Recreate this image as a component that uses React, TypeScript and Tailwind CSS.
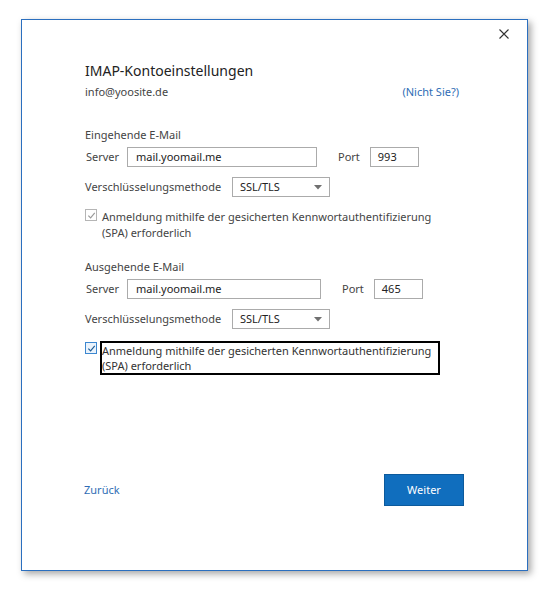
import React from "react";

const font = { fontFamily: '"Noto Sans", "Open Sans", sans-serif' };

function Tick({ color }: { color: string }) {
  return (
    <svg viewBox="0 0 10 10" className="w-[9px] h-[9px]">
      <path d="M1.5 5.2 L4 7.6 L8.6 2.2" fill="none" stroke={color} strokeWidth="1.3" />
    </svg>
  );
}

function ServerRow({ server, port, inputW, portGap }: { server: string; port: string; inputW: string; portGap: string }) {
  return (
    <div className="flex items-center h-[20px] mt-[4px]">
      <span className="w-[42px] pl-px text-[11px] text-[#444]">Server</span>
      <div className={`${inputW} h-[20px] border border-[#ababab] flex items-center pl-[8px] text-[11px] text-[#222]`}>
        {server}
      </div>
      <span className={`${portGap} text-[11px] text-[#444]`}>Port</span>
      <div className="w-[49px] h-[20px] border border-[#ababab] flex items-center pl-[7px] ml-[10px] text-[11px] text-[#222]">
        {port}
      </div>
    </div>
  );
}

function EncRow() {
  return (
    <div className="flex items-center h-[20px] mt-[10px]">
      <span className="w-[147px] text-[11px] text-[#444]">Verschlüsselungsmethode</span>
      <div className="w-[98px] h-[20px] border border-[#ababab] flex items-center justify-between pl-[7px] pr-[7px] text-[11px] text-[#222]">
        <span>SSL/TLS</span>
        <svg viewBox="0 0 8 5" className="w-[8px] h-[5px]">
          <path d="M0 0 H8 L4 4.5 Z" fill="#707070" />
        </svg>
      </div>
    </div>
  );
}

export default function App() {
  return (
    <div className="w-[553px] h-[597px] bg-white pt-[19px] pl-[21px]" style={font}>
      <div className="w-[507px] h-[552px] border border-[#2b6fbf] bg-white shadow-[3px_3px_7px_rgba(0,0,0,0.35)] flex flex-col">
        <div className="flex justify-end pt-[9px] pr-[18px]">
          <svg viewBox="0 0 10 10" className="w-[10px] h-[10px]">
            <path d="M0.5 0.5 L9.5 9.5 M9.5 0.5 L0.5 9.5" stroke="#333" strokeWidth="1.1" />
          </svg>
        </div>

        <div className="pl-[63px] flex flex-col">
          <h1 className="mt-[21px] h-[22px] leading-[22px] text-[14px] text-[#222]">IMAP-Kontoeinstellungen</h1>
          <div className="mt-[2px] h-[16px] leading-[16px] flex text-[11px]">
            <span className="text-[#444]">info@yoosite.de</span>
            <span className="ml-auto mr-[68px] text-[#2f6db5]">(Nicht Sie?)</span>
          </div>

          <div className="mt-[27px] h-[16px] leading-[16px] text-[11px] text-[#444]">Eingehende E-Mail</div>
          <ServerRow server="mail.yoomail.me" port="993" inputW="w-[190px]" portGap="ml-[21px]" />
          <EncRow />
          <div className="mt-[12px] flex items-start">
            <div className="mt-0 w-[12px] h-[12px] border border-[#b5b5b5] flex items-center justify-center">
              <Tick color="#9a9a9a" />
            </div>
            <p className="ml-[5px] w-[345px] text-[11px] leading-[16px] text-[#444]">
              Anmeldung mithilfe der gesicherten Kennwortauthentifizierung (SPA) erforderlich
            </p>
          </div>

          <div className="mt-[18px] h-[16px] leading-[16px] text-[11px] text-[#444]">Ausgehende E-Mail</div>
          <ServerRow server="mail.yoomail.me" port="465" inputW="w-[194px]" portGap="ml-[21px]" />
          <EncRow />
          <div className="mt-[12px] flex items-start">
            <div className="mt-[1px] w-[12px] h-[12px] border border-[#3c87d0] bg-[#eaf3fc] flex items-center justify-center">
              <Tick color="#1e5b94" />
            </div>
            <p className="ml-[3px] w-[340px] h-[34px] border-2 border-black text-[11px] leading-[15px] text-[#333]">
              Anmeldung mithilfe der gesicherten Kennwortauthentifizierung (SPA) erforderlich
            </p>
          </div>
        </div>

        <div className="mt-auto mb-[64px] pl-[62px] pr-[63px] flex items-center justify-between">
          <span className="text-[11px] text-[#2f6db5]">Zurück</span>
          <button className="w-[80px] h-[32px] bg-[#106ebe] border border-[#0c5a9c] text-white text-[11px]">Weiter</button>
        </div>
      </div>
    </div>
  );
}
